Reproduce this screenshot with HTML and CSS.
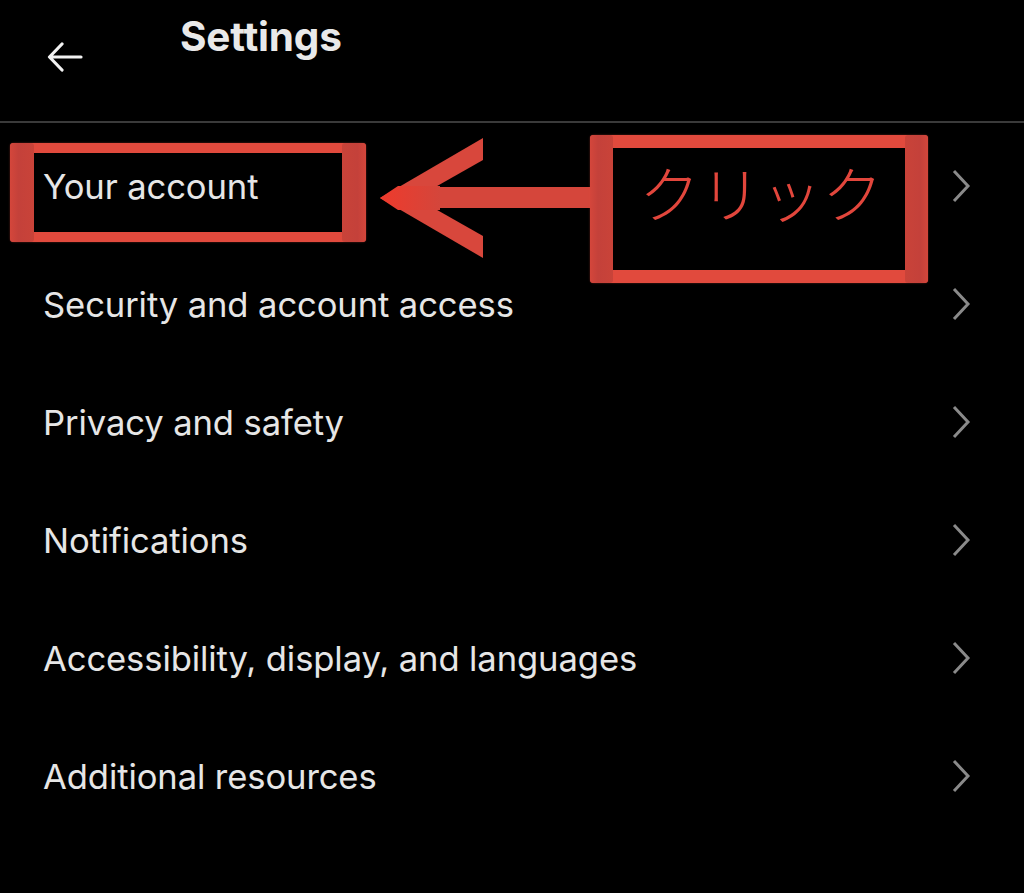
FILE: index.html
```html
<!DOCTYPE html>
<html lang="en">
<head>
<meta charset="utf-8">
<title>Settings</title>
<link rel="stylesheet" href="styles.css">
</head>
<body>
<div class="page">
  <header class="header">
    <svg class="back" width="36" height="30" viewBox="0 0 36 30">
      <path d="M34 15H3M15 2L2.5 15L15 28" fill="none" stroke="#f2f2f2" stroke-width="3.2" stroke-linecap="round" stroke-linejoin="round"/>
    </svg>
    <h1 class="title">Settings</h1>
  </header>
  <ul class="list">
    <li class="row"><span class="label">Your account</span><svg class="chev" width="20" height="34" viewBox="0 0 20 34"><polyline points="3,2 17,17 3,32" fill="none" stroke="#8a8a8a" stroke-width="3"/></svg></li>
    <li class="row"><span class="label">Security and account access</span><svg class="chev" width="20" height="34" viewBox="0 0 20 34"><polyline points="3,2 17,17 3,32" fill="none" stroke="#8a8a8a" stroke-width="3"/></svg></li>
    <li class="row"><span class="label">Privacy and safety</span><svg class="chev" width="20" height="34" viewBox="0 0 20 34"><polyline points="3,2 17,17 3,32" fill="none" stroke="#8a8a8a" stroke-width="3"/></svg></li>
    <li class="row"><span class="label">Notifications</span><svg class="chev" width="20" height="34" viewBox="0 0 20 34"><polyline points="3,2 17,17 3,32" fill="none" stroke="#8a8a8a" stroke-width="3"/></svg></li>
    <li class="row"><span class="label">Accessibility, display, and languages</span><svg class="chev" width="20" height="34" viewBox="0 0 20 34"><polyline points="3,2 17,17 3,32" fill="none" stroke="#8a8a8a" stroke-width="3"/></svg></li>
    <li class="row"><span class="label">Additional resources</span><svg class="chev" width="20" height="34" viewBox="0 0 20 34"><polyline points="3,2 17,17 3,32" fill="none" stroke="#8a8a8a" stroke-width="3"/></svg></li>
  </ul>

  <div class="mark mark-account"></div>
  <svg class="mark-arrow" width="240" height="140" viewBox="370 128 240 140">
    <defs>
      <linearGradient id="tipglow" x1="0" y1="0" x2="1" y2="0">
        <stop offset="0" stop-color="#ee3a2c"/>
        <stop offset="1" stop-color="#d4463b"/>
      </linearGradient>
    </defs>
    <rect x="400" y="187" width="198" height="21" fill="#d5463b"/>
    <polygon points="380,198 483,138 483,160 416,198" fill="#d8473c"/>
    <polygon points="380,198 416,198 483,236 483,258" fill="#d8473c"/>
    <polygon points="380,198 398,186 440,186 440,210 398,210" fill="url(#tipglow)"/>
  </svg>
  <div class="mark mark-click"><span class="click-text">クリック</span></div>
</div>
</body>
</html>
```
FILE: styles.css
```css
html, body {
  margin: 0;
  padding: 0;
  background: #000;
}

.page {
  position: relative;
  width: 1024px;
  height: 893px;
  overflow: hidden;
  background: #000;
  font-family: Inter, "Noto Sans", "Liberation Sans", sans-serif;
  color: #e6e6e6;
}

.header {
  display: flex;
  align-items: flex-start;
  height: 121px;
  border-bottom: 2px solid #3a3a3a;
  box-sizing: content-box;
}

.back {
  margin-left: 47px;
  margin-top: 42px;
  flex: none;
}

.title {
  margin: 13px 0 0 97px;
  font-size: 40.5px;
  font-weight: 700;
  color: #e9e9e9;
  letter-spacing: -0.2px;
  line-height: 48px;
}

.list {
  list-style: none;
  margin: 0;
  padding: 4px 0 0 0;
}

.row {
  display: flex;
  align-items: center;
  justify-content: space-between;
  height: 118px;
  padding: 0 53px 0 43px;
}

.label {
  font-size: 34.6px;
  font-weight: 400;
  color: #e6e6e6;
  letter-spacing: -0.1px;
}

.chev {
  flex: none;
}

.mark {
  position: absolute;
  box-sizing: border-box;
  border-style: solid;
  border-color: #e14a3d;
  border-left-width: 0;
  border-right-width: 0;
  border-radius: 4px;
  box-shadow: 0 0 2px rgba(228, 75, 62, 0.5);
}

.mark::before,
.mark::after {
  content: "";
  position: absolute;
  top: -10px;
  bottom: -10px;
  background: linear-gradient(90deg, #d4463b 0%, #c4413a 35%, #c94339 100%);
  border-radius: 3px;
}

.mark::after {
  background: linear-gradient(90deg, #c94339 0%, #c4413a 65%, #d4463b 100%);
}

.mark-account {
  left: 10px;
  top: 143px;
  width: 356px;
  height: 99px;
  border-top-width: 10px;
  border-bottom-width: 10px;
}

.mark-account::before {
  left: 0;
  width: 24px;
}

.mark-account::after {
  right: 0;
  width: 24px;
}

.mark-arrow {
  position: absolute;
  left: 370px;
  top: 128px;
}

.mark-click {
  left: 590px;
  top: 135px;
  width: 338px;
  height: 148px;
  border-top-width: 13px;
  border-bottom-width: 13px;
  display: flex;
  justify-content: flex-start;
  align-items: flex-start;
}

.mark-click::before {
  top: -13px;
  bottom: -13px;
  left: 0;
  width: 23px;
}

.mark-click::after {
  top: -13px;
  bottom: -13px;
  right: 0;
  width: 23px;
}

.click-text {
  margin-top: 4px;
  margin-left: 49px;
  font-family: "Noto Sans CJK JP", sans-serif;
  font-weight: 300;
  font-size: 61px;
  line-height: 80px;
  letter-spacing: 0;
  color: #e2463c;
}
```
